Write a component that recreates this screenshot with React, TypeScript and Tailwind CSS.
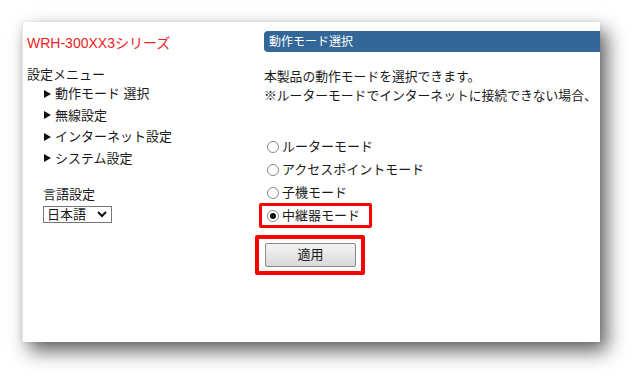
import React from 'react';

const jp = "font-['Liberation_Sans','Noto_Sans_CJK_JP',sans-serif]";

const menu = ['動作モード 選択', '無線設定', 'インターネット設定', 'システム設定'];
const modes = ['ルーターモード', 'アクセスポイントモード', '子機モード', '中継器モード'];

function Arrow() {
  return (
    <svg width="7" height="8" viewBox="0 0 7 8" className="shrink-0">
      <path d="M0 0 L7 4 L0 8 Z" fill="#111" />
    </svg>
  );
}

function Radio({ checked }: { checked?: boolean }) {
  return (
    <span className="w-[12px] h-[12px] rounded-full border border-[#8a8a8a] bg-white flex items-center justify-center shrink-0 mr-[3px]">
      {checked && <span className="w-[6px] h-[6px] rounded-full bg-[#111]" />}
    </span>
  );
}

export default function App() {
  return (
    <div className={`w-[642px] h-[384px] bg-white pt-[22px] pl-[22px] ${jp}`}>
      <div className="w-[578px] h-[320px] bg-white overflow-hidden flex border-l border-[#e6e6e6] shadow-[7px_9px_18px_rgba(0,0,0,0.62),0_0_5px_rgba(0,0,0,0.08)] text-[13px] text-[#1a1a1a]">
        {/* sidebar */}
        <div className="w-[233px] shrink-0 pl-[4px] pt-[11px]">
          <div className="text-[14px] leading-[20px] text-[#ee1c25]">WRH-300XX3シリーズ</div>
          <div className="mt-[13px] leading-[17px]">設定メニュー</div>
          <div className="flex flex-col">
            {menu.map((m) => (
              <div key={m} className="h-[21.5px] flex items-center gap-[4px] pl-[17px]">
                <Arrow />
                <span>{m}</span>
              </div>
            ))}
          </div>
          <div className="pl-[16px] mt-[16px]">
            <div className="leading-[20px]">言語設定</div>
            <div className="mt-[1px] w-[69px] h-[17px] border border-[#777] flex items-center justify-between pl-[3px] pr-[4px] leading-none">
              <span>日本語</span>
              <svg width="10" height="7" viewBox="0 0 10 7">
                <path d="M1 1 L5 5 L9 1" fill="none" stroke="#111" strokeWidth="2" />
              </svg>
            </div>
          </div>
        </div>

        {/* main */}
        <div className="flex-1 min-w-0 pt-[9px] pl-[8px]">
          <div className="h-[21px] bg-[#336699] rounded-l-[4px] flex items-center pl-[5px] text-white text-[12px] whitespace-nowrap">
            動作モード選択
          </div>
          <div className="mt-[15px] leading-[19px] text-[12.8px]">
            <div>本製品の動作モードを選択できます。</div>
            <div>※ルーターモードでインターネットに接続できない場合、</div>
          </div>
          <div className="mt-[30px] -ml-[5px] flex flex-col">
            {modes.map((m, i) =>
              i === 3 ? (
                <div key={m} className="h-[25px] -my-[1px] w-[113px] border-[3px] border-[#ff0000] rounded-[2px] pl-[5px] flex items-center">
                  <Radio checked />
                  <span>{m}</span>
                </div>
              ) : (
                <div key={m} className="h-[23px] pl-[8px] flex items-center whitespace-nowrap">
                  <Radio />
                  <span>{m}</span>
                </div>
              )
            )}
          </div>
          <div className="mt-[8px] -ml-[9px] w-[110px] border-[4px] border-[#ff0000] rounded-[2px] pt-[4px] pb-[4px] pl-[6px] pr-[5px]">
            <button className="w-[91px] h-[24px] border border-[#8a8a8a] rounded-[2px] bg-gradient-to-b from-[#f4f4f4] to-[#d9d9d9] text-[13px] text-[#1a1a1a]">
              適用
            </button>
          </div>
        </div>
      </div>
    </div>
  );
}
